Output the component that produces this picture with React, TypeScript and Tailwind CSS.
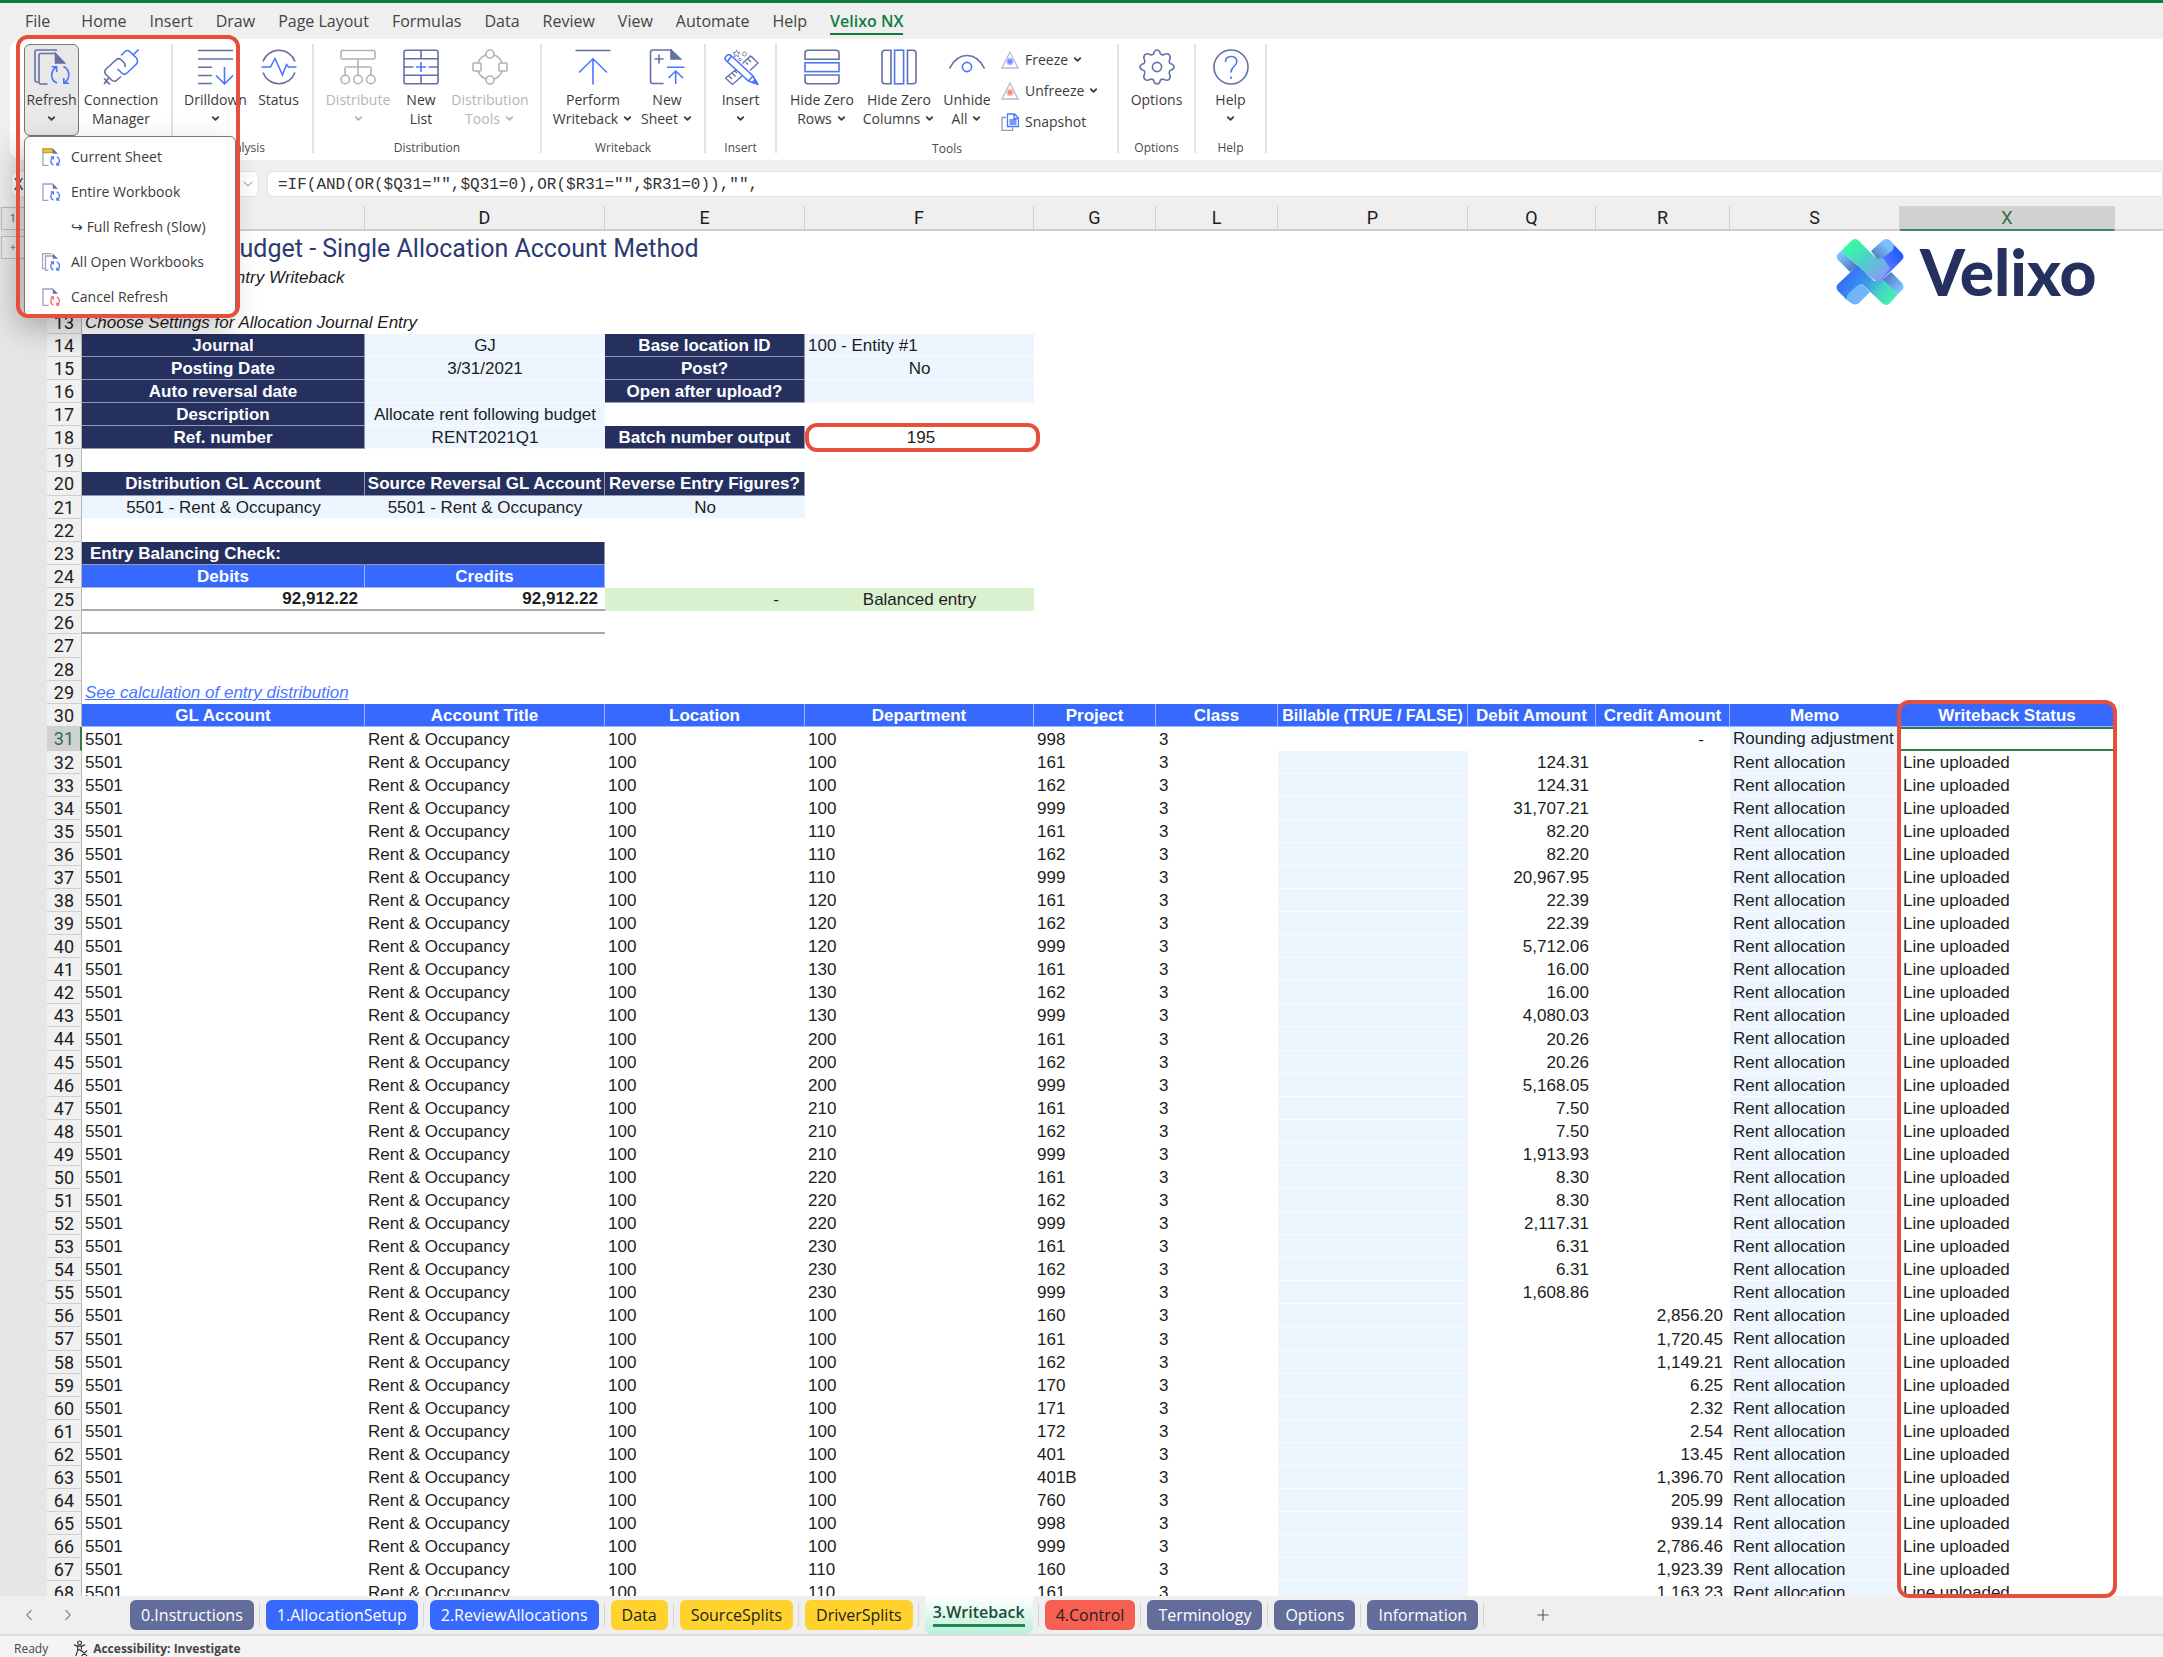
import { Fragment, type ReactNode } from 'react'
import { ChevronDown, ChevronLeft, ChevronRight, Plus } from 'lucide-react'

const SLATE = '#6470a5'
const BLUE = '#4a76ff'
const GRAY = '#b3b3b3'

function Icon({ children, small }: { children: ReactNode; small?: boolean }) {
  return (
    <svg
      viewBox="0 0 36 36"
      className={small ? 'h-[18px] w-[18px] shrink-0' : 'h-9 w-9 shrink-0'}
      fill="none"
      stroke={SLATE}
      strokeWidth={small ? 2.6 : 1.6}
      aria-hidden="true"
    >
      {children}
    </svg>
  )
}

function RefreshArrows({ color = BLUE }: { color?: string }) {
  return (
    <g stroke={color}>
      <path d="M23 34C16 31 16 22 22.500 18M17.500 17.800h5.200v5.200M29.500 17.500C36.500 21 36.500 30 30 34M35 34.200h-5.200v-5.200" />
    </g>
  )
}

const icons = {
  refresh: (
    <Icon>
      <path d="M4 33H3Q1 33 1 31V3Q1 1 3 1H23M13.500 35H7Q5 35 5 33V6.500Q5 4.500 7 4.500H22" />
      <path d="M21.500 4.500L30.500 14H21.500Z" fill={SLATE} />
      <RefreshArrows />
    </Icon>
  ),
  connection: (
    <Icon>
      <path d="M22 18Q22.500 15 20.500 13L17.500 10.200Q15.500 9 13.500 10.500L3 20Q.8 22.500 2.500 25L8.500 31Q11.500 33.500 14 31L18 27.500M1 29.500L7 35.500M6 28.500L1 35" />
      <path d="M18 6.500L22 2.500Q24 .8 26 2L33.500 9Q35.500 12 33.500 15L24 24Q22 26 20 25L14.500 20M30 6L35.500 .5" stroke={BLUE} />
    </Icon>
  ),
  drilldown: (
    <Icon>
      <path d="M0 1.500H35M0 10H35M0 18.300H14M0 26.500H14M0 34.500H14" />
      <path d="M26.500 18V34.500M18 26.500L26.500 34.800L35 26.500" stroke={BLUE} />
    </Icon>
  ),
  status: (
    <Icon>
      <path d="M2 12.500A17 17 0 0 1 34 12.500M2 23.500A17 17 0 0 0 34 23.500" />
      <path d="M.5 18H9.500L14 9.500L21.500 26L25.500 15.500L27.500 18H35.500" stroke={BLUE} />
    </Icon>
  ),
  distribute: (
    <Icon>
      <g stroke={GRAY}>
        <rect x="1" y="1.500" width="34" height="8.500" rx="1.500" />
        <path d="M18 10V26M5 26V19.500Q5 18 6.500 18H29.500Q31 18 31 19.500V26" />
        <circle cx="5.200" cy="30.500" r="4.300" />
        <circle cx="18" cy="30.500" r="4.300" />
        <circle cx="30.800" cy="30.500" r="4.300" />
      </g>
    </Icon>
  ),
  newList: (
    <Icon>
      <rect x="1" y="1.200" width="34" height="33.500" rx="2" />
      <path d="M1 9.800H35M1 26.300H35M18 1.200V9.800M18 26.300V34.700M1 18H10.500M25.500 18H35" />
      <path d="M18 13V23M13 18H23" stroke={BLUE} />
    </Icon>
  ),
  distributionTools: (
    <Icon>
      <g stroke={GRAY}>
        <circle cx="18" cy="5" r="4" />
        <circle cx="18" cy="31" r="4" />
        <rect x="1" y="14" width="8" height="8" rx="1" />
        <rect x="27" y="14" width="8" height="8" rx="1" />
        <path d="M6 14Q8 8 14 6M22 6Q28 8 30 14M6 22Q8 28 14 30M22 30Q28 28 30 22" />
      </g>
    </Icon>
  ),
  writeback: (
    <Icon>
      <path d="M.5 1.500H35.500" />
      <path d="M18 35.500V10M4 23.500L18 9.800L32 23.500" stroke={BLUE} />
    </Icon>
  ),
  newSheet: (
    <Icon>
      <path d="M14.500 34.500H4Q1.500 34.500 1.500 32V3.500Q1.500 1 4 1H23M10 5.500V14.500M5.500 10H14.500" />
      <path d="M22 1L31.500 10H22Z" fill={SLATE} />
      <path d="M18 18.200H35.500M26.700 35V22.500M19.500 29L26.700 22L34 29" stroke={BLUE} />
    </Icon>
  ),
  insert: (
    <Icon>
      <g strokeWidth="1.300">
        <path d="M19.500 14.500L27.500 7L35 14L27 21.500M13 20.500L2.500 29L9.500 35.500L19 27M25 10l3 3M28.500 7.500l4 4M23 13.500l2 2M9 24l3.500 3.500M6 27l3 3M12 22l2 2" />
        <path d="M13.500 1l1 2.500 2.500.2-2 1.700.7 2.600-2.200-1.500-2.200 1.500.7-2.600-2-1.700 2.500-.2z" strokeWidth=".8" />
        <circle cx="21.500" cy="5" r="2" strokeWidth=".8" />
        <circle cx="17" cy="10.500" r="1.200" strokeWidth=".8" />
      </g>
      <g stroke={BLUE}>
        <path d="M8 6.500L30 27L34.500 35L25.500 32L3 11.500Q1 9.500 3 7.500Q5.500 4.500 8 6.500ZM30 27L25.500 32M8.500 7L4.500 12.500" />
        <path d="M32 30.500L34.500 35L29.500 33.300Z" fill={BLUE} />
      </g>
    </Icon>
  ),
  hideRows: (
    <Icon>
      <path d="M1 10.200V4Q1 1.200 4 1.200H32Q35 1.200 35 4V10.200ZM1 26V32Q1 34.800 4 34.800H32Q35 34.800 35 32V26Z" />
      <rect x="1" y="13.800" width="34" height="8.800" stroke={BLUE} />
    </Icon>
  ),
  hideColumns: (
    <Icon>
      <path d="M10 1.200H4Q1 1.200 1 4V32Q1 34.800 4 34.800H10ZM26.500 1.200H32Q35 1.200 35 4V32Q35 34.800 32 34.800H26.500Z" />
      <rect x="13.600" y="1.200" width="9" height="33.600" stroke={BLUE} />
    </Icon>
  ),
  unhide: (
    <Icon>
      <path d="M.5 19.500Q7 6.500 18 6.500Q29 6.500 35.500 19.500" />
      <circle cx="18" cy="18" r="4.600" stroke={BLUE} />
    </Icon>
  ),
  options: (
    <Icon>
      <path
        strokeLinejoin="round"
        d="M14.500 5Q15.500 1 18 1Q20.500 1 21.500 5Q23 6.500 25 5.500Q28.500 4 30.200 5.800Q32 7.500 30.500 11Q29.500 13 31 14.500Q35 15.500 35 18Q35 20.500 31 21.500Q29.500 23 30.500 25Q32 28.500 30.200 30.200Q28.500 32 25 30.500Q23 29.500 21.500 31Q20.500 35 18 35Q15.500 35 14.500 31Q13 29.500 11 30.500Q7.500 32 5.800 30.200Q4 28.500 5.500 25Q6.500 23 5 21.500Q1 20.500 1 18Q1 15.500 5 14.500Q6.500 13 5.500 11Q4 7.500 5.800 5.800Q7.500 4 11 5.500Q13 6.500 14.500 5Z"
      />
      <circle cx="18" cy="18" r="4.600" />
    </Icon>
  ),
  help: (
    <Icon>
      <circle cx="18" cy="18" r="17" />
      <path d="M12.500 13Q12.500 7.500 18 7.500Q23.800 7.500 23.800 12.500Q23.800 15 21 17.500Q18 20 18 23.500M18 27.500V30" stroke={BLUE} />
    </Icon>
  ),
  freeze: (
    <Icon small>
      <path d="M18 2L34 34H2Z" stroke="#b4bad6" />
      <circle cx="18" cy="21" r="6" fill="#6b8eff" stroke="#a9bfff" />
    </Icon>
  ),
  unfreeze: (
    <Icon small>
      <path d="M18 2L34 34H2Z" stroke="#b4bad6" />
      <circle cx="18" cy="21" r="6" fill="#ff8479" stroke="#ffc0ba" />
    </Icon>
  ),
  snapshot: (
    <Icon small>
      <path d="M10 9H2V35H23V29" stroke="#8f98c4" />
      <path d="M13 2H27L35 10V27H13ZM26 2V11H35M17 14H31M17 18H31M17 22H31" stroke={BLUE} />
    </Icon>
  ),
}

function MenuFileIcon({ color, header, stacked }: { color?: string; header?: boolean; stacked?: boolean }) {
  return (
    <Icon small>
      <g stroke="#9aa3c8">
        {stacked ? <path d="M5 31H1V1H19M13 35H7V6H22" /> : <path d="M13 35H2V2H22" />}
      </g>
      {header && <path d="M2 2H21V9H2Z" fill="#ffc629" stroke="#c9a03a" />}
      <path d="M22 2L31 11H22Z" fill={SLATE} strokeWidth="1" />
      <RefreshArrows color={color} />
    </Icon>
  )
}

const menuItems = [
  { label: 'Current Sheet', icon: <MenuFileIcon header /> },
  { label: 'Entire Workbook', icon: <MenuFileIcon /> },
  { label: '↪ Full Refresh (Slow)', icon: <span className="w-[18px]" /> },
  { label: 'All Open Workbooks', icon: <MenuFileIcon stacked /> },
  { label: 'Cancel Refresh', icon: <MenuFileIcon color="#f26a60" /> },
]

const ribbonTabs = [
  'Home', 'Insert', 'Draw', 'Page Layout', 'Formulas',
  'Data', 'Review', 'View', 'Automate', 'Help',
]

function Caret() {
  return <ChevronDown className="inline h-[11px] w-[11px]" strokeWidth={4} />
}

type RibbonButtonProps = {
  icon: ReactNode
  lines: string[]
  width: string
  caret?: boolean
  disabled?: boolean
  active?: boolean
}

function RibbonButton({ icon, lines, width, caret, disabled, active }: RibbonButtonProps) {
  return (
    <button
      type="button"
      disabled={disabled}
      className={`flex h-[92px] shrink-0 flex-col items-center rounded-md border pt-1 text-sm leading-[19px] whitespace-nowrap ${width} ${
        active ? 'border-[#777] bg-[#e8e8e8]' : 'border-transparent'
      } ${disabled ? 'text-[#b5b5b5]' : 'text-[#3b3b3b]'}`}
    >
      {icon}
      <span className="mt-[5px]">{lines[0]}</span>
      <span className="flex h-[19px] items-center gap-1">
        {lines[1]}
        {caret && <Caret />}
      </span>
    </button>
  )
}

function RibbonGroup({ label, width, children }: { label: string; width: string; children: ReactNode }) {
  return (
    <section className={`flex shrink-0 flex-col border-r-2 border-[#e2e2e2] ${width}`}>
      <div className="flex justify-center">{children}</div>
      <div className="pt-0.5 text-center text-xs leading-5 text-[#4a4a4a]">{label}</div>
    </section>
  )
}

function Ribbon() {
  return (
    <div className="ml-[10px] flex h-[121px] shrink-0 rounded-l-xl bg-white pt-[5px] pb-[7px]">
      <RibbonGroup label="" width="w-[163px] pl-1.5">
        <div className="relative">
          <RibbonButton icon={icons.refresh} lines={['Refresh']} width="w-[55px]" caret active />
          <RefreshMenu />
        </div>
        <RibbonButton icon={icons.connection} lines={['Connection', 'Manager']} width="w-[84px]" />
      </RibbonGroup>
      <RibbonGroup label="Analysis" width="w-[141px]">
        <RibbonButton icon={icons.drilldown} lines={['Drilldown']} width="w-[72px]" caret />
        <RibbonButton icon={icons.status} lines={['Status']} width="w-[54px]" />
      </RibbonGroup>
      <RibbonGroup label="Distribution" width="w-[228px]">
        <RibbonButton icon={icons.distribute} lines={['Distribute']} width="w-[72px]" caret disabled />
        <RibbonButton icon={icons.newList} lines={['New', 'List']} width="w-[54px]" />
        <RibbonButton icon={icons.distributionTools} lines={['Distribution', 'Tools']} width="w-[84px]" caret disabled />
      </RibbonGroup>
      <RibbonGroup label="Writeback" width="w-[164px]">
        <RibbonButton icon={icons.writeback} lines={['Perform', 'Writeback']} width="w-[88px]" caret />
        <RibbonButton icon={icons.newSheet} lines={['New', 'Sheet']} width="w-[60px]" caret />
      </RibbonGroup>
      <RibbonGroup label="Insert" width="w-[71px]">
        <RibbonButton icon={icons.insert} lines={['Insert']} width="w-[54px]" caret />
      </RibbonGroup>
      <RibbonGroup label="Tools" width="w-[342px]">
        <RibbonButton icon={icons.hideRows} lines={['Hide Zero', 'Rows']} width="w-[74px]" caret />
        <RibbonButton icon={icons.hideColumns} lines={['Hide Zero', 'Columns']} width="w-[80px]" caret />
        <RibbonButton icon={icons.unhide} lines={['Unhide', 'All']} width="w-[56px]" caret />
        <div className="ml-1.5 flex w-[108px] flex-col text-sm whitespace-nowrap text-[#3b3b3b]">
          <button type="button" className="flex h-[31px] items-center gap-1.5">
            {icons.freeze}
            <span className="flex items-center gap-1">Freeze <Caret /></span>
          </button>
          <button type="button" className="flex h-[31px] items-center gap-1.5">
            {icons.unfreeze}
            <span className="flex items-center gap-1">Unfreeze <Caret /></span>
          </button>
          <button type="button" className="flex h-[31px] items-center gap-1.5">
            {icons.snapshot} Snapshot
          </button>
        </div>
      </RibbonGroup>
      <RibbonGroup label="Options" width="w-[77px]">
        <RibbonButton icon={icons.options} lines={['Options']} width="w-[60px]" />
      </RibbonGroup>
      <RibbonGroup label="Help" width="w-[71px]">
        <RibbonButton icon={icons.help} lines={['Help']} width="w-[54px]" caret />
      </RibbonGroup>
    </div>
  )
}

function RefreshMenu() {
  return (
    <ul className="absolute top-[92px] left-0 z-20 w-[212px] rounded-md border border-[#777] bg-white py-0.5 shadow-[-8px_12px_30px_rgba(0,0,0,0.25)]">
      {menuItems.map((item) => (
        <li key={item.label}>
          <button type="button" className="flex h-[35px] w-full items-center gap-[11px] pl-[17px] text-sm whitespace-nowrap text-[#3b3b3b]">
            {item.icon}
            {item.label}
          </button>
        </li>
      ))}
    </ul>
  )
}

const columns = [
  { id: 'C', width: 'w-[283px]' },
  { id: 'D', width: 'w-[240px]' },
  { id: 'E', width: 'w-[200px]' },
  { id: 'F', width: 'w-[229px]' },
  { id: 'G', width: 'w-[122px]' },
  { id: 'L', width: 'w-[122px]' },
  { id: 'P', width: 'w-[190px]' },
  { id: 'Q', width: 'w-[128px]' },
  { id: 'R', width: 'w-[134px]' },
  { id: 'S', width: 'w-[170px]' },
  { id: 'X', width: 'w-[215px]' },
]

type Kind = 'text' | 'number' | 'dash' | 'navy' | 'blue' | 'input' | 'inputLeft' | 'total' | 'okDash' | 'ok'

const kinds: Record<Kind, string> = {
  text: 'pl-[3px]',
  number: 'pr-[7px] text-right',
  dash: 'pr-[26px] text-right',
  navy: 'bg-[#25305f] text-center font-bold text-white border-b border-r border-white/50',
  blue: 'bg-[#3769ff] text-center font-bold text-white border-b border-r border-white/50',
  input: 'bg-[#edf5ff] text-center border-b border-white/60',
  inputLeft: 'bg-[#edf5ff] pl-[3px] border-b border-white/60',
  total: 'border-b-2 border-[#a9a9a9] pr-[7px] text-right font-bold',
  okDash: 'bg-[#daf1d0] pr-[26px] text-right',
  ok: 'bg-[#daf1d0] text-center',
}

type Cell = [Kind, ReactNode?, string?]
type Row = Record<string, Cell>

const BatchNumber = (
  <span className="relative block text-center">
    195
    <span className="absolute -inset-x-[3px] -inset-y-[5px] -right-[6px] rounded-xl border-4 border-[#e54f3b]" />
  </span>
)

const settings: Record<number, Row> = {
  13: { C: ['text', 'Choose Settings for Allocation Journal Entry', 'italic'] },
  14: { C: ['navy', 'Journal'], D: ['input', 'GJ'], E: ['navy', 'Base location ID'], F: ['inputLeft', '100 - Entity #1'] },
  15: { C: ['navy', 'Posting Date'], D: ['input', '3/31/2021'], E: ['navy', 'Post?'], F: ['input', 'No'] },
  16: { C: ['navy', 'Auto reversal date'], D: ['input'], E: ['navy', 'Open after upload?'], F: ['input'] },
  17: { C: ['navy', 'Description'], D: ['input', 'Allocate rent following budget'] },
  18: { C: ['navy', 'Ref. number'], D: ['input', 'RENT2021Q1'], E: ['navy', 'Batch number output'], F: ['text', BatchNumber] },
  19: {},
  20: { C: ['navy', 'Distribution GL Account'], D: ['navy', 'Source Reversal GL Account'], E: ['navy', 'Reverse Entry Figures?'] },
  21: { C: ['input', '5501 - Rent & Occupancy'], D: ['input', '5501 - Rent & Occupancy'], E: ['input', 'No'] },
  22: {},
  23: { C: ['navy', <span className="block pl-2 text-left">Entry Balancing Check:</span>, 'border-r-[#25305f]'], D: ['navy'] },
  24: { C: ['blue', 'Debits'], D: ['blue', 'Credits'] },
  25: { C: ['total', '92,912.22'], D: ['total', '92,912.22'], E: ['okDash', '-'], F: ['ok', 'Balanced entry'] },
  26: { C: ['total'], D: ['total'] },
  27: {},
  28: {},
  29: {
    C: ['text', <a href="#distribution" className="text-[#4a76ff] italic underline">See calculation of entry distribution</a>],
  },
  30: {
    C: ['blue', 'GL Account'],
    D: ['blue', 'Account Title'],
    E: ['blue', 'Location'],
    F: ['blue', 'Department'],
    G: ['blue', 'Project'],
    L: ['blue', 'Class'],
    P: ['blue', 'Billable (TRUE / FALSE)', 'text-base leading-[19px]'],
    Q: ['blue', 'Debit Amount'],
    R: ['blue', 'Credit Amount'],
    S: ['blue', 'Memo'],
    X: ['blue', 'Writeback Status'],
  },
}

// department, project, debit, credit
const entries: [string, string, string, string][] = [
  ['100', '998', '', '-'],
  ['100', '161', '124.31', ''],
  ['100', '162', '124.31', ''],
  ['100', '999', '31,707.21', ''],
  ['110', '161', '82.20', ''],
  ['110', '162', '82.20', ''],
  ['110', '999', '20,967.95', ''],
  ['120', '161', '22.39', ''],
  ['120', '162', '22.39', ''],
  ['120', '999', '5,712.06', ''],
  ['130', '161', '16.00', ''],
  ['130', '162', '16.00', ''],
  ['130', '999', '4,080.03', ''],
  ['200', '161', '20.26', ''],
  ['200', '162', '20.26', ''],
  ['200', '999', '5,168.05', ''],
  ['210', '161', '7.50', ''],
  ['210', '162', '7.50', ''],
  ['210', '999', '1,913.93', ''],
  ['220', '161', '8.30', ''],
  ['220', '162', '8.30', ''],
  ['220', '999', '2,117.31', ''],
  ['230', '161', '6.31', ''],
  ['230', '162', '6.31', ''],
  ['230', '999', '1,608.86', ''],
  ['100', '160', '', '2,856.20'],
  ['100', '161', '', '1,720.45'],
  ['100', '162', '', '1,149.21'],
  ['100', '170', '', '6.25'],
  ['100', '171', '', '2.32'],
  ['100', '172', '', '2.54'],
  ['100', '401', '', '13.45'],
  ['100', '401B', '', '1,396.70'],
  ['100', '760', '', '205.99'],
  ['100', '998', '', '939.14'],
  ['100', '999', '', '2,786.46'],
  ['110', '160', '', '1,923.39'],
  ['110', '161', '', '1,163.23'],
]

const entryRows = entries.map(([department, project, debit, credit], i): [number, Row] => [
  31 + i,
  {
    C: ['text', '5501'],
    D: ['text', 'Rent & Occupancy'],
    E: ['text', '100'],
    F: ['text', department],
    G: ['text', project],
    L: ['text', '3'],
    P: [i === 0 ? 'text' : 'input'],
    Q: ['number', debit],
    R: [credit === '-' ? 'dash' : 'number', credit],
    S: ['inputLeft', i === 0 ? 'Rounding adjustment' : 'Rent allocation'],
    X: ['text', i === 0 ? '' : 'Line uploaded', i === 0 ? 'border-y-2 border-[#2f7d4f]' : ''],
  },
])

const rows: [number, Row][] = [
  ...Object.entries(settings).map(([n, row]): [number, Row] => [Number(n), row]),
  ...entryRows,
]

const tallRows = [20, 27, 31, 44, 57]

function Sheet() {
  return (
    <div className="relative flex min-h-0 flex-1">
      <div className="flex min-w-0 flex-1 overflow-hidden bg-white">
        <aside className="flex w-[47px] shrink-0 flex-col items-start bg-[#e6e6e6] text-[11px] text-[#555]">
          <button type="button" className="mt-px ml-px h-[23px] w-6 border border-[#bdbdbd] bg-[#e9e9e9]">1</button>
          <button type="button" className="mt-[6px] ml-px h-[23px] w-6 border border-[#bdbdbd] bg-[#e9e9e9]">+</button>
        </aside>
        <table className="h-px w-full table-fixed border-separate border-spacing-0 font-['Liberation_Sans',sans-serif] text-[17px] leading-[19px] whitespace-nowrap text-[#1d1d1d]">
          <thead>
            <tr className="h-[25px] bg-[#efefef] font-[Roboto,sans-serif] text-lg leading-[22px]">
              <th className="w-[35px] border-b-2 border-[#cfcfcf]" />
              {columns.map(({ id, width }) => (
                <th
                  key={id}
                  scope="col"
                  className={`border-r border-b-2 font-normal ${width} ${
                    id === 'X' ? 'border-[#cfcfcf] border-b-[#3a8a60] bg-[#d1d1d1] text-[#2f6f4d]' : 'border-[#cfcfcf]'
                  }`}
                >
                  {id}
                </th>
              ))}
              <th className="border-b-2 border-[#cfcfcf]" />
            </tr>
          </thead>
          <tbody>
            <tr className="h-[35px]">
              <td className="border-r border-[#b5b5b5] bg-[#f0f0f0]" />
              <td colSpan={12} className="pl-[142px] font-[Roboto,sans-serif] text-[25px] leading-8 text-[#2b3a72]">
                Budget - Single Allocation Account Method
              </td>
            </tr>
            <tr className="h-[23px]">
              <td className="border-r border-[#b5b5b5] bg-[#f0f0f0]" />
              <td colSpan={12} className="pl-[82px] italic">Journal Entry Writeback</td>
            </tr>
            <tr className="h-[22px]">
              <td className="border-r border-[#b5b5b5] bg-[#f0f0f0]" />
              <td colSpan={12} />
            </tr>
            {rows.map(([n, row]) => (
              <tr key={n} className={tallRows.includes(n) ? 'h-6' : 'h-[23px]'}>
                <th
                  scope="row"
                  className={`border-r border-b pt-px text-right font-[Roboto,sans-serif] text-lg leading-[20px] font-normal ${
                    n === 31
                      ? 'border-r-2 border-[#cfcfcf] border-r-[#2f7d4f] bg-[#d1d1d1] pr-[6px] text-[#2f6f4d]'
                      : 'border-[#cfcfcf] border-r-[#b5b5b5] bg-[#f0f0f0] pr-[7px]'
                  }`}
                >
                  {n}
                </th>
                {columns.map(({ id }) => {
                  const [kind, content, extra] = row[id] ?? ['text']
                  return (
                    <td key={id} className={`${kinds[kind]} ${extra ?? ''}`}>
                      {content}
                    </td>
                  )
                })}
                <td />
              </tr>
            ))}
          </tbody>
        </table>
      </div>
      <Logo />
      <div className="pointer-events-none absolute top-[494px] -bottom-0.5 left-[1897px] z-10 w-[220px] rounded-xl border-4 border-[#e54f3b]" />
    </div>
  )
}

function Logo() {
  return (
    <div className="absolute top-8 left-[1836px] flex items-center gap-4">
      <svg viewBox="0 0 68 68" className="h-[68px] w-[68px]" role="img" aria-label="Velixo logo">
        <defs>
          <linearGradient id="greenDown" x1="0" y1="0" x2="1" y2="1">
            <stop offset="0.1" stopColor="#36ffa0" />
            <stop offset="0.5" stopColor="#4fd0c8" />
            <stop offset="0.95" stopColor="#9490ff" />
          </linearGradient>
          <linearGradient id="blueUp" x1="0" y1="0.3" x2="1" y2="0.7">
            <stop offset="0" stopColor="#3360ff" />
            <stop offset="0.5" stopColor="#3c9be6" />
            <stop offset="0.75" stopColor="#45d8c0" />
            <stop offset="1" stopColor="#48efb0" />
          </linearGradient>
          <linearGradient id="right" x1="1" y1="0" x2="0" y2="1">
            <stop offset="0.2" stopColor="#245cff" />
            <stop offset="1" stopColor="#9490ff" />
          </linearGradient>
          <linearGradient id="fold" x1="0" y1="0" x2="1" y2="1">
            <stop offset="0.2" stopColor="#7abfff" />
            <stop offset="1" stopColor="#4468ad" />
          </linearGradient>
          <linearGradient id="foldBack" x1="1" y1="1" x2="0" y2="0">
            <stop offset="0.2" stopColor="#7abfff" />
            <stop offset="1" stopColor="#4468ad" />
          </linearGradient>
          <linearGradient id="foldUp" x1="1" y1="0" x2="0" y2="1">
            <stop offset="0.3" stopColor="#7abfff" />
            <stop offset="1" stopColor="#4468ad" />
          </linearGradient>
        </defs>
        <path d="M5 13L22 28L14 34L2 22Q-1 18 3 15Z" fill="url(#fold)" />
        <path d="M55 34L66 45Q69 49 66 52L62 56L46 42Z" fill="url(#foldBack)" />
        <path d="M35 13L46 3Q50 -1 55 3L58 7L58 14L44 25Z" fill="url(#foldUp)" />
        <path d="M22 27L38 43L46 41L62 56L54 65Q51 69 46 65L26 46L11 62L2 53Q-1 49 2 46Z" fill="url(#blueUp)" />
        <path d="M11 62Q10 57 14 54L22 47Q26 45 29 49L34 54L23 65Q19 68 15 65Z" fill="#73b5fa" />
        <path d="M57 6L66 15Q69 19 66 22L46 42Q42 45 38 41L36 30L40 22Q44 22 48 19L56 13Q59 10 57 6Z" fill="url(#right)" />
        <path d="M5 13L15 3Q19 -1 23 3L39 19Q43 22 47 20L54 30L46 40Q42 45 38 42Z" fill="url(#greenDown)" />
      </svg>
      <span className="font-[Lato,sans-serif] text-[64px] leading-[68px] font-black text-[#25305f]">Velixo</span>
    </div>
  )
}

const sheetTabs = [
  { name: '0.Instructions', style: 'bg-[#626d9c] text-white' },
  { name: '1.AllocationSetup', style: 'bg-[#3769ff] text-white' },
  { name: '2.ReviewAllocations', style: 'bg-[#3769ff] text-white' },
  { name: 'Data', style: 'bg-[#ffd22e] text-[#222]' },
  { name: 'SourceSplits', style: 'bg-[#ffd22e] text-[#222]' },
  { name: 'DriverSplits', style: 'bg-[#ffd22e] text-[#222]' },
  { name: '3.Writeback', style: 'active' },
  { name: '4.Control', style: 'bg-[#f66052] text-[#222]' },
  { name: 'Terminology', style: 'bg-[#626d9c] text-white' },
  { name: 'Options', style: 'bg-[#626d9c] text-white' },
  { name: 'Information', style: 'bg-[#626d9c] text-white' },
]

function SheetTabs() {
  return (
    <nav className="flex h-[40px] shrink-0 items-center border-b-2 border-[#dcdcdc] bg-[#efefef] text-base whitespace-nowrap">
      <button type="button" aria-label="Previous sheet" className="ml-5 text-[#888]">
        <ChevronLeft className="h-[18px] w-[18px]" strokeWidth={1.5} />
      </button>
      <button type="button" aria-label="Next sheet" className="mr-[53px] ml-[21px] text-[#888]">
        <ChevronRight className="h-[18px] w-[18px]" strokeWidth={1.5} />
      </button>
      {sheetTabs.map((tab) => (
        <Fragment key={tab.name}>
          {tab.style === 'active' ? (
            <button type="button" className="h-full rounded-b-md bg-gradient-to-b from-white to-[#b9f0d9] px-2 pb-1 font-semibold text-[#1f4a35]">
              <span className="block border-b-3 border-[#22874f] leading-6">{tab.name}</span>
            </button>
          ) : (
            <button type="button" className={`h-[30px] rounded-md px-[11px] ${tab.style}`}>
              {tab.name}
            </button>
          )}
          <span className="mr-1.5 ml-[5px] h-6 w-px bg-[#d5d5d5]" />
        </Fragment>
      ))}
      <button type="button" aria-label="New sheet" className="ml-11 text-[#555]">
        <Plus className="h-[18px] w-[18px]" strokeWidth={1.5} />
      </button>
    </nav>
  )
}

export default function App() {
  return (
    <div className="relative flex h-screen flex-col overflow-hidden border-t-3 border-[#107c41] bg-[#efefef] font-['Open_Sans',sans-serif]">
      <nav className="flex h-9 shrink-0 items-center gap-[23px] pt-0.5 pl-[25px] text-base text-[#444]">
        <a href="#file" className="border-b-2 border-transparent pr-2">File</a>
        {ribbonTabs.map((tab) => (
          <a key={tab} href="#ribbon" className="border-b-2 border-transparent">
            {tab}
          </a>
        ))}
        <a href="#velixo" className="border-b-2 border-[#107c41] font-semibold text-[#107c41]">Velixo NX</a>
      </nav>

      <Ribbon />

      {/* Name box and formula bar */}
      <div className="flex h-[46px] shrink-0 gap-2 pt-[11px] pb-[9px] pl-[11px]">
        <div className="flex w-[248px] items-center justify-between rounded-md border border-[#e2e2e2] bg-white pr-0.5">
          <input aria-label="Name box" defaultValue="X31" className="w-12 pl-0.5 text-base text-[#333]" />
          <ChevronDown className="h-4 w-4 text-[#888]" strokeWidth={1.5} />
        </div>
        <input
          aria-label="Formula"
          defaultValue={'=IF(AND(OR($Q31="",$Q31=0),OR($R31="",$R31=0)),"",'}
          className="min-w-0 flex-1 rounded-l-md border border-[#e2e2e2] bg-white pt-0.5 pl-[10px] font-['Liberation_Mono',monospace] text-base text-[#333]"
        />
      </div>

      <Sheet />
      <SheetTabs />

      <footer className="flex h-[21px] shrink-0 items-center bg-[#f4f4f4] pt-1 pl-[14px] text-xs text-[#444]">
        Ready
        <svg viewBox="0 0 18 18" className="mr-1 ml-6 h-[17px] w-[17px]" fill="none" stroke="#333" strokeWidth="1.2" aria-hidden="true">
          <circle cx="8" cy="3" r="2" />
          <path d="M2 5L6 7V11L4 17M14 5L10 7V10M2 5Q8 8 14 5M6 11L8 10L10 12M10 11L16 17M16 11L10 17" />
        </svg>
        <span className="font-bold">Accessibility: Investigate</span>
      </footer>

      <div className="pointer-events-none absolute top-8 left-[16px] z-30 h-[283px] w-[224px] rounded-xl border-4 border-[#e54f3b]" />
    </div>
  )
}
